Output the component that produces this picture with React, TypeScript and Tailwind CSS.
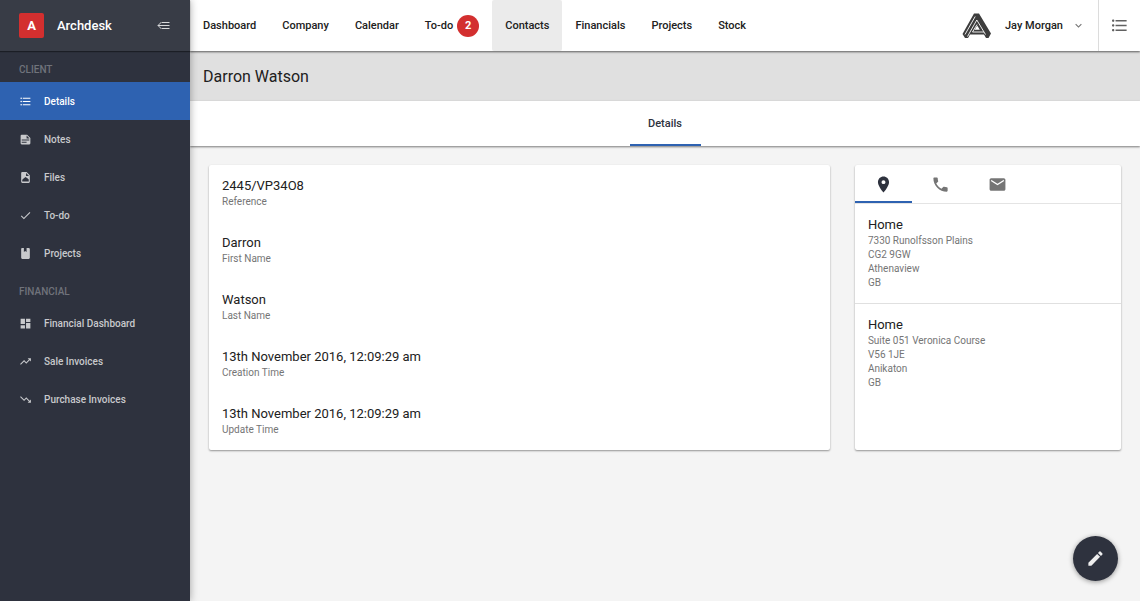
import { useState } from "react";
import type { ReactNode } from "react";
import {
  MdCheck,
  MdDashboard,
  MdEdit,
  MdEmail,
  MdFormatListBulleted,
  MdKeyboardArrowDown,
  MdLocationOn,
  MdPhone,
  MdTrendingDown,
  MdTrendingUp,
} from "react-icons/md";

/* ================= ICONS ================= */

const Svg = ({ size, children }: { size: number; children: ReactNode }) => (
  <svg
    width={size}
    height={size}
    viewBox="0 0 24 24"
    fill="currentColor"
    fillRule="evenodd"
    aria-hidden="true"
  >
    {children}
  </svg>
);

const NoteIcon = () => (
  <Svg size={13}>
    <path d="M5 3h10l6 6v10a2 2 0 0 1-2 2H5a2 2 0 0 1-2-2V5a2 2 0 0 1 2-2zm9 1.500V10h5.500zM5 12v2h14v-2zm0 4v2h9v-2z" />
  </Svg>
);

const FileIcon = () => (
  <Svg size={13}>
    <path d="M6 2h8l6 6v12a2 2 0 0 1-2 2H6a2 2 0 0 1-2-2V4a2 2 0 0 1 2-2zm7 1.500V9h5.500zM6 19.500h12v-4l-2.500-2L12 11l-3.500 3L6 16z" />
  </Svg>
);

const BookIcon = () => (
  <Svg size={13}>
    <path d="M5.500 2H9v7l2.500-1.800L14 9V2h4a2 2 0 0 1 2 2v16a2 2 0 0 1-2 2H6a2 2 0 0 1-2-2V4a2 2 0 0 1 1.500-2z" />
  </Svg>
);

const CollapseIcon = () => (
  <svg width="13" height="11" viewBox="0 0 13 11" fill="none" stroke="currentColor" aria-hidden="true">
    <path d="M5 2.500h7.500M1 5.500h11.500M5 8.500h7.500M4.500 2 1 5.500 4.500 9" />
  </svg>
);

const CompanyLogo = () => (
  <svg width="30" height="26" viewBox="0 0 30 26" fill="none" aria-hidden="true">
    <path
      d="M12 .5h5l12 20-2.500 4.500H24l-2-3.500H8L6 25H3L.5 21z"
      fill="#3d3d3d"
    />
    <g stroke="#fff" strokeWidth=".9">
      <path d="M13.200 3.500 3 21.500" />
      <path d="M5.500 23.500 14.800 7l8.700 14.500" />
      <path d="M15 11.500 10.500 19H22" />
    </g>
    <path d="m15.200 12.500 2.600 4.300h-5.200z" fill="#fff" />
  </svg>
);

/* ================= DATA ================= */

const clientLinks = [
  { label: "Details", icon: <MdFormatListBulleted size={13} /> },
  { label: "Notes", icon: <NoteIcon /> },
  { label: "Files", icon: <FileIcon /> },
  { label: "To-do", icon: <MdCheck size={13} /> },
  { label: "Projects", icon: <BookIcon /> },
];

const financialLinks = [
  { label: "Financial Dashboard", icon: <MdDashboard size={13} /> },
  { label: "Sale Invoices", icon: <MdTrendingUp size={13} /> },
  { label: "Purchase Invoices", icon: <MdTrendingDown size={13} /> },
];

const topLinks = [
  { label: "Dashboard" },
  { label: "Company" },
  { label: "Calendar" },
  { label: "To-do", badge: 2 },
  { label: "Contacts" },
  { label: "Financials" },
  { label: "Projects" },
  { label: "Stock" },
];

const fields = [
  { label: "Reference", value: "2445/VP34O8" },
  { label: "First Name", value: "Darron" },
  { label: "Last Name", value: "Watson" },
  { label: "Creation Time", value: "13th November 2016, 12:09:29 am" },
  { label: "Update Time", value: "13th November 2016, 12:09:29 am" },
];

const contactTabs = [
  { label: "Addresses", icon: <MdLocationOn size={19} /> },
  { label: "Phone numbers", icon: <MdPhone size={19} /> },
  { label: "Emails", icon: <MdEmail size={19} /> },
];

const addresses = [
  { title: "Home", lines: ["7330 Runolfsson Plains", "CG2 9GW", "Athenaview", "GB"] },
  { title: "Home", lines: ["Suite 051 Veronica Course", "V56 1JE", "Anikaton", "GB"] },
];

/* ================= SIDEBAR ================= */

type SideLink = { label: string; icon: ReactNode };

function SideSection({ title, links, active }: { title: string; links: SideLink[]; active?: string }) {
  return (
    <section>
      <h2 className="flex h-[31px] items-center px-[19px] pt-1.5 text-[10px] leading-4 font-medium text-[#70737b]">
        {title}
      </h2>
      {links.map((link) => (
        <a
          key={link.label}
          href="#"
          className={`flex h-[38px] items-center gap-3 px-[19px] text-[10px] leading-4 font-medium ${
            link.label === active ? "bg-[#2e62b1] text-white" : "text-[#c8c9cc]"
          }`}
        >
          {link.icon}
          <span className="pt-0.5">{link.label}</span>
        </a>
      ))}
    </section>
  );
}

function Sidebar() {
  return (
    <aside className="z-20 w-[190px] shrink-0 bg-[#2e323e] shadow-[0_0_8px_rgba(0,0,0,0.35)]">
      <div className="flex h-[51px] items-center bg-[#383c46] pr-5 pl-[19px] shadow-[0_1px_1px_rgba(0,0,0,0.4)]">
        <span className="flex size-[25px] items-center justify-center rounded-xs bg-[#d32f2f] text-[13px] font-bold text-white">
          A
        </span>
        <span className="ml-[13px] text-[13px] leading-4 font-medium text-white">Archdesk</span>
        <button type="button" aria-label="Collapse menu" className="ml-auto text-[#d7d8da]">
          <CollapseIcon />
        </button>
      </div>
      <nav className="flex flex-col gap-px">
        <SideSection title="CLIENT" links={clientLinks} active="Details" />
        <SideSection title="FINANCIAL" links={financialLinks} />
      </nav>
    </aside>
  );
}

/* ================= TOP BAR ================= */

function TopBar() {
  return (
    <header className="z-10 flex h-[51px] shrink-0 bg-white text-[11px] leading-4 font-medium text-[#212121] shadow-[0_1px_2px_rgba(0,0,0,0.6)]">
      <nav className="flex">
        {topLinks.map((link) => (
          <a
            key={link.label}
            href="#"
            className={`flex items-center gap-1 rounded-xs px-[13px] ${
              link.label === "Contacts" ? "bg-[#ebebeb]" : ""
            }`}
          >
            {link.label}
            {link.badge && (
              <span className="flex size-[22px] items-center justify-center rounded-full bg-[#d32f2f] font-bold text-white">
                {link.badge}
              </span>
            )}
          </a>
        ))}
      </nav>
      <div className="ml-auto flex">
        <button type="button" className="flex items-center pr-[13px]">
          <CompanyLogo />
          <span className="mr-[9px] ml-[13px]">Jay Morgan</span>
          <MdKeyboardArrowDown size={13} className="text-[#757575]" />
        </button>
        <button
          type="button"
          aria-label="Open list"
          className="flex w-[42px] items-center justify-center border-l border-[#dcdcdc] text-[#616161]"
        >
          <MdFormatListBulleted size={19} />
        </button>
      </div>
    </header>
  );
}

/* ================= CARDS ================= */

function DetailsCard() {
  return (
    <dl className="rounded-xs bg-white shadow-[0_1px_2px_rgba(0,0,0,0.4)]">
      {fields.map((field) => (
        <div key={field.label} className="flex flex-col-reverse p-[13px]">
          <dt className="text-[10px] leading-[15px] text-[#757575]">{field.label}</dt>
          <dd className="text-[13px] leading-4 text-[#212121]">{field.value}</dd>
        </div>
      ))}
    </dl>
  );
}

function ContactCard() {
  const [tab, setTab] = useState("Addresses");

  return (
    <section className="rounded-xs bg-white shadow-[0_1px_2px_rgba(0,0,0,0.4)]">
      <div className="flex h-[39px] border-b border-[#e4e4e4]">
        {contactTabs.map((item) => (
          <button
            key={item.label}
            type="button"
            aria-label={item.label}
            onClick={() => setTab(item.label)}
            className={`flex w-[57px] items-center justify-center border-b-2 pt-0.5 ${
              item.label === tab ? "border-[#2e62b1] text-[#2e323e]" : "border-transparent text-[#757575]"
            }`}
          >
            {item.icon}
          </button>
        ))}
      </div>
      <div className="divide-y divide-[#e0e0e0]">
        {addresses.map((address) => (
          <address key={address.lines[0]} className="p-[13px] not-italic">
            <h3 className="pb-px text-[13px] leading-4 text-[#212121]">{address.title}</h3>
            {address.lines.map((line) => (
              <p key={line} className="text-[10px] leading-[14px] text-[#757575]">
                {line}
              </p>
            ))}
          </address>
        ))}
      </div>
    </section>
  );
}

export default function App() {
  return (
    <div className="flex min-h-screen bg-[#f4f4f4] font-['Roboto',sans-serif]">
      <Sidebar />
      <div className="flex min-w-0 flex-1 flex-col">
        <TopBar />
        <h1 className="flex h-[50px] items-center bg-[#e0e0e0] px-[13px] pt-0.5 text-base text-[#212121]">
          Darron Watson
        </h1>
        <div className="flex h-[45px] justify-center bg-white shadow-[0_1px_2px_rgba(0,0,0,0.5)]">
          <button
            type="button"
            className="w-[71px] border-b-2 border-[#2e62b1] pt-0.5 text-[11px] leading-4 font-medium text-[#2e323e]"
          >
            Details
          </button>
        </div>
        <main className="grid grid-cols-[7fr_3fr] gap-[25px] p-[19px]">
          <DetailsCard />
          <ContactCard />
        </main>
      </div>
      <button
        type="button"
        aria-label="Edit contact"
        className="fixed right-[22px] bottom-5 z-10 flex size-[45px] items-center justify-center rounded-full bg-[#2e323e] text-[#eeeeee] shadow-[0_1px_5px_rgba(0,0,0,0.4)]"
      >
        <MdEdit size={19} />
      </button>
    </div>
  );
}
